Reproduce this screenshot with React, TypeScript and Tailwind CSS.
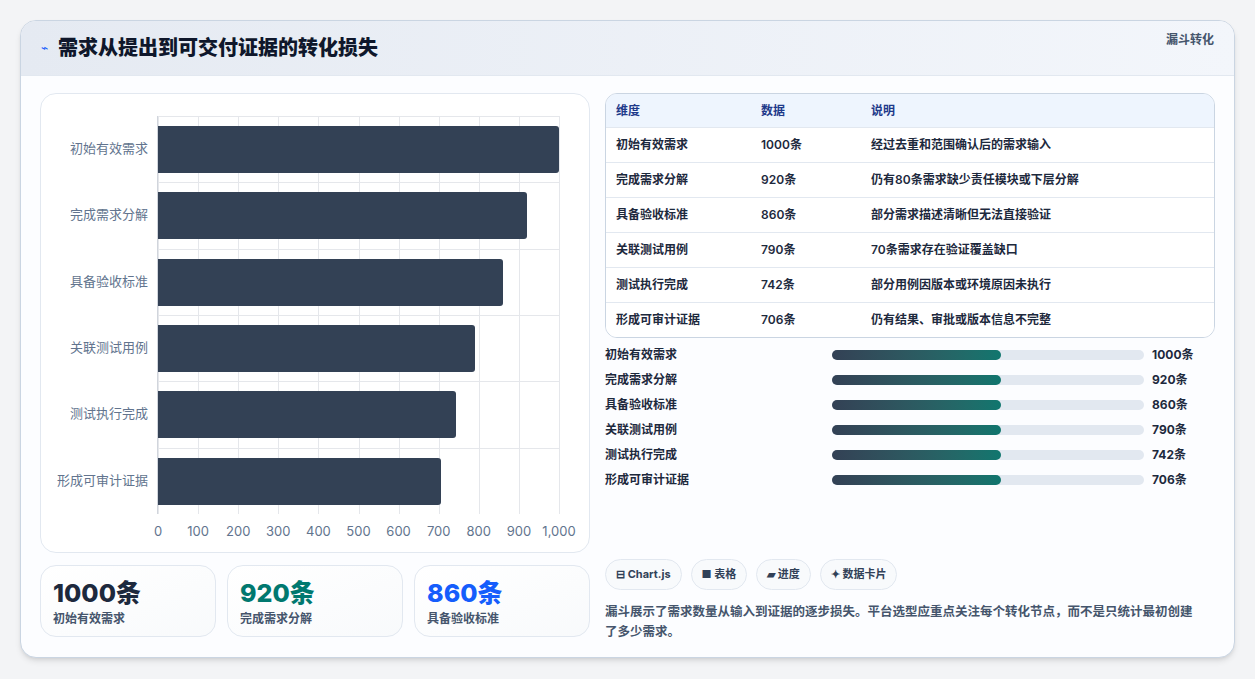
const rows = [
  { name: '初始有效需求', v: 1000, note: '经过去重和范围确认后的需求输入' },
  { name: '完成需求分解', v: 920, note: '仍有80条需求缺少责任模块或下层分解' },
  { name: '具备验收标准', v: 860, note: '部分需求描述清晰但无法直接验证' },
  { name: '关联测试用例', v: 790, note: '70条需求存在验证覆盖缺口' },
  { name: '测试执行完成', v: 742, note: '部分用例因版本或环境原因未执行' },
  { name: '形成可审计证据', v: 706, note: '仍有结果、审批或版本信息不完整' },
];

const ticks = ['0', '100', '200', '300', '400', '500', '600', '700', '800', '900', '1,000'];

function Chart() {
  return (
    <div className="relative h-[460px] rounded-2xl border border-slate-200 bg-white">
      <div className="absolute left-[117px] top-[22px] h-[398px] w-[401px]">
        {ticks.map((t, i) => (
          <div key={t} className="absolute top-0 h-[398px] w-px bg-gray-200" style={{ left: i * 40.1 }}>
            <div className="absolute top-[406px] -translate-x-1/2 whitespace-nowrap text-[13px] text-slate-500">{t}</div>
          </div>
        ))}
        {rows.map((r, i) => (
          <div key={r.name} className="absolute left-0 w-full border-t border-gray-200" style={{ top: i * 66.3 }} />
        ))}
        <div className="absolute left-[-1px] top-0 h-[398px] w-px bg-gray-300" />
        {rows.map((r, i) => (
          <div key={r.name} className="absolute left-0 w-[401px]" style={{ top: i * 66.3 + 10, height: 47 }}>
            <div className="absolute right-[411px] top-[13px] whitespace-nowrap text-[13px] text-slate-500">{r.name}</div>
            <div className="h-[47px] rounded-r-[3px] bg-[#334155]" style={{ width: (r.v / 1000) * 401 }} />
          </div>
        ))}
      </div>
    </div>
  );
}

function Stat({ v, label, color }: { v: string; label: string; color: string }) {
  return (
    <div className="flex-1 rounded-2xl border border-slate-200 bg-gradient-to-br from-white to-slate-50 px-3 pt-2.5 pb-2">
      <div className={`text-[25px] font-extrabold leading-[34px] ${color}`}>{v}</div>
      <div className="text-[12px] font-semibold text-slate-600">{label}</div>
    </div>
  );
}

export default function App() {
  return (
    <div className="min-h-[679px] bg-[#f3f4f6] px-5 py-5" style={{ fontFamily: 'Inter, "Noto Sans CJK SC", sans-serif' }}>
      <div className="h-[638px] overflow-hidden rounded-2xl border border-slate-300 bg-[#fcfdff] shadow-md">
        <div className="flex h-[55px] items-center justify-between border-b border-slate-200 bg-gradient-to-r from-[#e5eaf2] to-[#f3f6fb] px-5">
          <div className="flex items-center gap-2.5">
            <span className="text-[12px] text-blue-600">⌁</span>
            <span className="text-[20px] font-extrabold text-slate-900">需求从提出到可交付证据的转化损失</span>
          </div>
          <span className="-mt-4 text-[12px] font-bold text-slate-600">漏斗转化</span>
        </div>
        <div className="flex gap-[15px] px-[19px] pt-[17px]">
          <div className="w-[551px]">
            <Chart />
            <div className="mt-3 flex gap-[11px]">
              <Stat v="1000条" label="初始有效需求" color="text-slate-800" />
              <Stat v="920条" label="完成需求分解" color="text-teal-700" />
              <Stat v="860条" label="具备验收标准" color="text-blue-600" />
            </div>
          </div>
          <div className="w-[611px]">
            <div className="overflow-hidden rounded-xl border border-slate-300 text-[12px] text-slate-800">
              <div className="flex h-[33px] items-center bg-[#eef5fe] font-bold text-[#1e3a8a]">
                <div className="w-[155px] pl-2.5">维度</div>
                <div className="w-[110px]">数据</div>
                <div>说明</div>
              </div>
              {rows.map((r) => (
                <div key={r.name} className="flex h-[35px] items-center border-t border-slate-200 bg-white font-semibold">
                  <div className="w-[155px] pl-2.5">{r.name}</div>
                  <div className="w-[110px]">{r.v}条</div>
                  <div>{r.note}</div>
                </div>
              ))}
            </div>
            <div className="mt-[9px] flex flex-col gap-[9px]">
              {rows.map((r) => (
                <div key={r.name} className="flex h-[16px] items-center text-[12px] font-semibold text-slate-800">
                  <div className="w-[227px]">{r.name}</div>
                  <div className="h-[10px] w-[312px] rounded-full bg-slate-200">
                    <div className="h-[10px] w-[169px] rounded-full bg-gradient-to-r from-[#334155] to-[#0f766e]" />
                  </div>
                  <div className="ml-2 font-bold">{r.v}条</div>
                </div>
              ))}
            </div>
            <div className="mt-[71px] flex gap-[9px] text-[11px] font-bold text-slate-700">
              <span className="rounded-full border border-slate-200 bg-slate-50 px-2.5 py-1.5">⊟ Chart.js</span>
              <span className="rounded-full border border-slate-200 bg-slate-50 px-2.5 py-1.5">■ 表格</span>
              <span className="rounded-full border border-slate-200 bg-slate-50 px-2.5 py-1.5">▰ 进度</span>
              <span className="rounded-full border border-slate-200 bg-slate-50 px-2.5 py-1.5">✦ 数据卡片</span>
            </div>
            <p className="mt-3 pr-4 text-[12.5px] font-semibold leading-[20px] text-slate-600">
              漏斗展示了需求数量从输入到证据的逐步损失。平台选型应重点关注每个转化节点，而不是只统计最初创建了多少需求。
            </p>
          </div>
        </div>
      </div>
    </div>
  );
}
